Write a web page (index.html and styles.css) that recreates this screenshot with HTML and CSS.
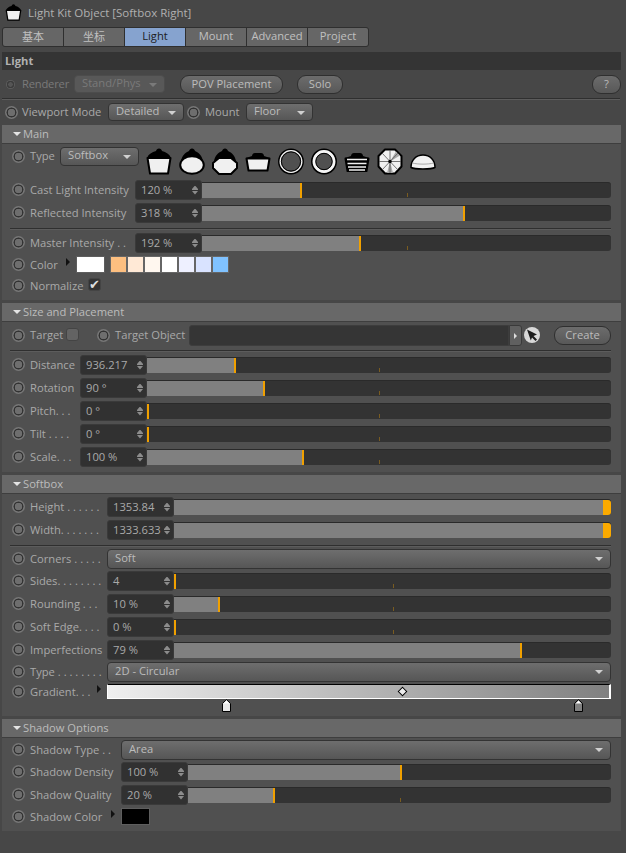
FILE: index.html
```html
<!DOCTYPE html>
<html lang="en">
<head>
<meta charset="utf-8">
<title>Light Kit Object</title>
<link rel="stylesheet" href="styles.css">
</head>
<body>
<svg class="defs" width="0" height="0" aria-hidden="true">
  <symbol id="softbox" viewBox="0 0 26 27">
    <path d="M13 0.500c-1.600 0-2.600 1.200-3 2.500C6 4 2.500 6 1 10H25C23.500 6 20 4 16 3c-.4-1.300-1.400-2.500-3-2.500z" fill="#000"/>
    <path d="M1.500 10H24.500L22 25.500H4z" fill="#f0f0f0" stroke="#000" stroke-width="2" stroke-linejoin="round"/>
  </symbol>
  <symbol id="stop" viewBox="0 0 9 13">
    <path d="M4.500 .7L8.500 4.500V12.500H.5V4.500z" fill="currentColor" stroke="#000" stroke-width="1"/>
    <path d="M4.500 1.500L7.500 4.500H1.500z" fill="#fff"/>
  </symbol>
</svg>

<header class="title-row">
  <svg class="title-icon"><use href="#softbox"/></svg>
  <span>Light Kit Object [Softbox Right]</span>
</header>

<nav class="tabs">
  <span class="tab cjk">基本</span>
  <span class="tab cjk">坐标</span>
  <span class="tab active">Light</span>
  <span class="tab">Mount</span>
  <span class="tab">Advanced</span>
  <span class="tab">Project</span>
</nav>

<div class="page-head">Light</div>

<div class="top-row renderer-row">
  <i class="radio dim"></i>
  <span class="dim-text renderer-label">Renderer</span>
  <span class="select disabled w-renderer">Stand/Phys<b class="caret"></b></span>
  <button class="pill w-pov">POV Placement</button>
  <button class="pill w-solo">Solo</button>
  <button class="pill w-help">?</button>
</div>
<hr class="rule top-rule">
<div class="top-row viewport-row">
  <i class="radio"></i>
  <span class="vp-label">Viewport Mode</span>
  <span class="select w-detailed">Detailed<b class="caret"></b></span>
  <i class="radio"></i>
  <span class="mount-label">Mount</span>
  <span class="select w-floor">Floor<b class="caret"></b></span>
</div>

<section class="sec">
  <h2 class="sec-head"><b class="open"></b>Main</h2>
  <div class="sec-body lw-main">
    <div class="row type-row">
      <i class="radio"></i>
      <span class="type-label">Type</span>
      <span class="select w-type">Softbox<b class="caret"></b></span>
      <div class="lights">
        <svg class="light"><use href="#softbox"/></svg>
        <svg class="light" viewBox="0 0 26 27"><path d="M13 .5c-1.500 0-2.500 1-3 2.500C6 4.500 3 8 2 13H24C23 8 20 4.500 16 3 15.500 1.500 14.500 .5 13 .5z" fill="#000"/><ellipse cx="13" cy="17" rx="11.800" ry="8.800" fill="#f0f0f0" stroke="#000" stroke-width="2"/></svg>
        <svg class="light" viewBox="0 0 26 27"><path d="M13 .5c-1.500 0-2.500 1-3 2.500C6 4.500 3 8 2 13H24C23 8 20 4.500 16 3 15.500 1.500 14.500 .5 13 .5z" fill="#000"/><path d="M7 10H19L25 15V20L19 26H7L1 20V15z" fill="#f0f0f0" stroke="#000" stroke-width="2" stroke-linejoin="round"/></svg>
        <svg class="light" viewBox="0 0 26 27"><path d="M7 8c0-1.500 1-3 3-3h6c2 0 3 1.500 3 3l6 2H1z" fill="#000"/><path d="M1.500 10.500H24.500L22.500 22.500H3.500z" fill="#f0f0f0" stroke="#000" stroke-width="2" stroke-linejoin="round"/></svg>
        <svg class="light" viewBox="0 0 26 27"><circle cx="13" cy="13.500" r="12.200" fill="none" stroke="#000" stroke-width="1.500"/><circle cx="13" cy="13.500" r="10.800" fill="none" stroke="#f2f2f2" stroke-width="1.300"/><circle cx="13" cy="13.500" r="9.600" fill="none" stroke="#000" stroke-width="1"/></svg>
        <svg class="light" viewBox="0 0 26 27"><circle cx="13" cy="13.500" r="12.200" fill="none" stroke="#000" stroke-width="1.600"/><circle cx="13" cy="13.500" r="10" fill="none" stroke="#f6f6f6" stroke-width="2.800"/><circle cx="13" cy="13.500" r="8.200" fill="none" stroke="#000" stroke-width="1"/></svg>
        <svg class="light" viewBox="0 0 26 27"><path d="M7 8c0-1.500 1-3 3-3h6c2 0 3 1.500 3 3l6 2H1z" fill="#000"/><path d="M1.500 10.500H24.500L22.500 23H3.500z" fill="#000" stroke="#000" stroke-width="2" stroke-linejoin="round"/><path d="M3 11.500H23M3.500 15.500H22.500M4 19H22M5 22H21" stroke="#f0f0f0" stroke-width="1.700" fill="none"/></svg>
        <svg class="light" viewBox="0 0 26 27"><path d="M8 1.500H18L24.500 8V18.500L18 25.500H8L1.500 18.500V8z" fill="#f0f0f0" stroke="#000" stroke-width="2" stroke-linejoin="round"/><path d="M13 13.500L10 25 16 25zM13 13.500L19 3.500 23 7.500z" fill="#a8a8a8"/><path d="M13 13.500V2M13 13.500L21 5M13 13.500H24M13 13.500L21 22M13 13.500V25M13 13.500L5 22M13 13.500H2M13 13.500L5 5" stroke="#555" stroke-width=".8"/><circle cx="13" cy="13.500" r="1.700" fill="#000"/></svg>
        <svg class="light" viewBox="0 0 26 27"><path d="M1 19.500C1 12 6 7 13 7s12 5 12 12.500c-4 2-20 2-24 0z" fill="#f2f2f2" stroke="#000" stroke-width="1.500" stroke-linejoin="round"/><path d="M2.500 15c5 1.500 16 1.500 21 0" fill="none" stroke="#aaa" stroke-width="1"/></svg>
      </div>
    </div>
    <div class="row slider-row"><i class="radio"></i><label>Cast Light Intensity</label><span class="num">120 %<b class="spin"></b></span><div class="track"><div class="fill" style="width:100px"></div></div></div>
    <div class="row slider-row"><i class="radio"></i><label>Reflected Intensity</label><span class="num">318 %<b class="spin"></b></span><div class="track"><div class="fill" style="width:263px"></div></div></div>
    <hr class="rule in">
    <div class="row slider-row"><i class="radio"></i><label>Master Intensity . .</label><span class="num">192 %<b class="spin"></b></span><div class="track"><div class="fill" style="width:159px"></div></div></div>
    <div class="row color-row">
      <i class="radio"></i>
      <span class="color-label">Color<b class="expand"></b></span>
      <span class="swatch white"></span>
      <div class="presets">
        <span class="preset p1"></span><span class="preset p2"></span><span class="preset p3"></span><span class="preset p4"></span><span class="preset p5"></span><span class="preset p6"></span><span class="preset p7"></span>
      </div>
    </div>
    <div class="row color-row">
      <i class="radio"></i>
      <span class="norm-label">Normalize</span>
      <span class="check on">✔</span>
    </div>
  </div>
</section>

<section class="sec">
  <h2 class="sec-head"><b class="open"></b>Size and Placement</h2>
  <div class="sec-body lw-size">
    <div class="row target-row">
      <i class="radio"></i>
      <span class="target-label">Target</span>
      <span class="check"></span>
      <i class="radio r2"></i>
      <span class="object-label">Target Object</span>
      <span class="link-field"></span>
      <span class="link-arrow"></span>
      <svg class="picker" viewBox="0 0 16 16"><circle cx="8" cy="8" r="8" fill="#d8d8d8"/><path d="M3 2.500L13 7.500 9.500 9 13 12.500 11.500 14 8 10.500 6.800 13.500z" fill="#1c1c1c"/></svg>
      <button class="pill w-create">Create</button>
    </div>
    <hr class="rule in">
    <div class="row slider-row"><i class="radio"></i><label>Distance</label><span class="num">936.217<b class="spin"></b></span><div class="track"><div class="fill" style="width:89px"></div></div></div>
    <div class="row slider-row"><i class="radio"></i><label>Rotation</label><span class="num">90 °<b class="spin"></b></span><div class="track"><div class="fill" style="width:118px"></div></div></div>
    <div class="row slider-row"><i class="radio"></i><label>Pitch. . .</label><span class="num">0 °<b class="spin"></b></span><div class="track"><div class="fill" style="width:2px"></div></div></div>
    <div class="row slider-row"><i class="radio"></i><label>Tilt . . . .</label><span class="num">0 °<b class="spin"></b></span><div class="track"><div class="fill" style="width:2px"></div></div></div>
    <div class="row slider-row"><i class="radio"></i><label>Scale. . .</label><span class="num">100 %<b class="spin"></b></span><div class="track"><div class="fill" style="width:157px"></div></div></div>
  </div>
</section>

<section class="sec">
  <h2 class="sec-head"><b class="open"></b>Softbox</h2>
  <div class="sec-body lw-soft">
    <div class="row slider-row first"><i class="radio"></i><label>Height . . . . . .</label><span class="num">1353.84<b class="spin"></b></span><div class="track"><div class="fill max" style="width:437px"></div></div></div>
    <div class="row slider-row"><i class="radio"></i><label>Width. . . . . . .</label><span class="num">1333.633<b class="spin"></b></span><div class="track"><div class="fill max" style="width:437px"></div></div></div>
    <hr class="rule in">
    <div class="row drop-row"><i class="radio"></i><label>Corners . . . . .</label><span class="select wide">Soft<b class="caret"></b></span></div>
    <div class="row slider-row"><i class="radio"></i><label>Sides. . . . . . . .</label><span class="num">4<b class="spin"></b></span><div class="track"><div class="fill" style="width:2px"></div></div></div>
    <div class="row slider-row"><i class="radio"></i><label>Rounding . . .</label><span class="num">10 %<b class="spin"></b></span><div class="track"><div class="fill" style="width:46px"></div></div></div>
    <div class="row slider-row"><i class="radio"></i><label>Soft Edge. . . .</label><span class="num">0 %<b class="spin"></b></span><div class="track"><div class="fill" style="width:2px"></div></div></div>
    <div class="row slider-row"><i class="radio"></i><label>Imperfections</label><span class="num">79 %<b class="spin"></b></span><div class="track"><div class="fill" style="width:348px"></div></div></div>
    <div class="row drop-row"><i class="radio"></i><label>Type . . . . . . . .</label><span class="select wide">2D - Circular<b class="caret"></b></span></div>
    <div class="row grad-row">
      <i class="radio"></i>
      <span class="grad-label">Gradient. . .<b class="expand"></b></span>
      <div class="gradient"><span class="knob"></span></div>
    </div>
    <div class="stops">
      <svg class="stop light-stop"><use href="#stop"/></svg>
      <svg class="stop dark-stop"><use href="#stop"/></svg>
    </div>
  </div>
</section>

<section class="sec last">
  <h2 class="sec-head"><b class="open"></b>Shadow Options</h2>
  <div class="sec-body lw-shadow">
    <div class="row drop-row first"><i class="radio"></i><label>Shadow Type . .</label><span class="select wide">Area<b class="caret"></b></span></div>
    <div class="row slider-row"><i class="radio"></i><label>Shadow Density</label><span class="num">100 %<b class="spin"></b></span><div class="track"><div class="fill" style="width:214px"></div></div></div>
    <div class="row slider-row"><i class="radio"></i><label>Shadow Quality</label><span class="num">20 %<b class="spin"></b></span><div class="track"><div class="fill" style="width:87px"></div></div></div>
    <div class="row color-row">
      <i class="radio"></i>
      <span class="shadow-color-label">Shadow Color<b class="expand"></b></span>
      <span class="swatch black"></span>
    </div>
  </div>
</section>
</body>
</html>
```

FILE: styles.css
```css
* { box-sizing: border-box; }
html, body { margin: 0; padding: 0; }
body {
  width: 626px;
  height: 853px;
  overflow: hidden;
  background: #474747;
  color: #a9a9a9;
  font: 11.2px/1 "Open Sans", "Noto Sans CJK SC", sans-serif;
}
.defs { position: absolute; }

.title-row { height: 27px; display: flex; align-items: center; gap: 6px; padding: 0 0 2px 5px; color: #b0b0b0; font-size: 11.5px; }
.title-icon { width: 17px; height: 17px; }

.tabs { display: flex; height: 20px; width: 367px; margin-left: 2px; border: 1px solid #2f2f2f; border-radius: 3px; background: #2f2f2f; gap: 1px; overflow: hidden; }
.tab { flex: 1; display: flex; align-items: center; justify-content: center; padding-bottom: 2px; background: #666; color: #c0c0c0; }
.tab.active { background: #86a3cf; color: #1d1d1d; }
.tab.cjk { font-size: 11px; }

.page-head { height: 18px; margin: 5px 5px 0 2px; padding-left: 3px; background: #343434; display: flex; align-items: center; font-weight: 700; color: #b0b0b0; }

.top-row { display: flex; align-items: center; height: 18px; }
.renderer-row { margin: 5px 0 0; padding: 0 5px 0 6px; }
.viewport-row { margin-top: 4px; padding-left: 5px; }
.top-rule { margin: 5px 6px 0 2px; }

.rule { border: 0; height: 1px; background: #2f2f2f; box-shadow: 0 1px 0 #5c5c5c; }
.rule.in { margin: 4px 0 2px -2px; }

.radio { flex: none; width: 13px; height: 13px; border-radius: 50%; background: radial-gradient(circle, #6e6e6e 0 3.500px, #333 4px 4.800px, #767676 5.200px 6.500px); }
.radio.dim { width: 9px; height: 9px; background: radial-gradient(circle, #555 0 2px, #3c3c3c 2.500px 3.500px, #5c5c5c 4px); }
.dim-text { color: #7a7a7a; }
.renderer-label { flex: none; width: 47px; margin-left: 7px; white-space: nowrap; letter-spacing: -.2px; }

.select { position: relative; display: flex; align-items: center; height: 18px; padding: 0 0 2px 7px; border: 1px solid #333; border-radius: 4px; background: linear-gradient(#6e6e6e, #565656); color: #bcbcbc; flex: none; }
.select.disabled { background: #585858; color: #7a7a7a; border-color: #4c4c4c; }
.caret { position: absolute; right: 7px; top: 7px; width: 0; height: 0; border: 4px solid transparent; border-top-color: #d0d0d0; border-bottom: 0; }
.disabled .caret { border-top-color: #7a7a7a; }
.w-renderer { width: 91px; margin-left: 5px; }
.w-detailed { width: 76px; margin-left: 4px; }
.w-floor { width: 67px; margin-left: 4px; }
.w-type { width: 79px; height: 19px; margin-left: 5px; }
.vp-label { margin-left: 4px; width: 82px; white-space: nowrap; }
.viewport-row .radio:nth-of-type(2) { margin-left: 3px; }
.mount-label { margin-left: 5px; width: 37px; }

.pill { flex: none; height: 19px; padding: 0; border: 1px solid #2f2f2f; border-radius: 9px; background: linear-gradient(#6c6c6c, #585858); color: #bcbcbc; font: inherit; }
.w-pov { width: 103px; margin-left: 15px; }
.w-solo { width: 46px; margin-left: 14px; }
.w-help { width: 29px; margin-left: auto; }
.w-create { width: 57px; margin-left: 14px; }

.sec { margin-top: 3px; margin-right: 5px; margin-left: 2px; background: #505050; }
.viewport-row + .sec { margin-top: 4px; }
.sec-head { margin: 0; height: 19px; display: flex; align-items: center; padding: 0 0 1px 11px; background: #686868; font: inherit; color: #bcbcbc; border-bottom: 1px solid #3e3e3e; }
.open { width: 0; height: 0; margin-right: 2px; border: 4px solid transparent; border-top-color: #e4e4e4; border-bottom: 0; }

.sec-body { padding: 0 10px 4px; }
.sec-body.lw-soft { padding-bottom: 2px; }
.row { display: flex; align-items: center; }
.row .radio { margin-right: 5px; }
.row label { flex: none; white-space: nowrap; }
.lw-main label { width: 105px; }
.lw-size label { width: 50px; }
.lw-soft label { width: 77px; }
.lw-shadow label { width: 91px; }

.slider-row { height: 23px; }
.slider-row.first { margin-top: 1px; }
.drop-row { height: 21px; }
.drop-row .select { height: 20px; }
.drop-row.first { margin-top: 1px; }
.color-row { height: 21px; }
.type-row { height: 24px; margin-bottom: 10px; }
.target-row { height: 22px; margin-top: 2px; }
.grad-row { height: 19px; }
.wide { flex: 1; }

.type-label { width: 25px; }
.lights { display: flex; gap: 7px; margin-left: 7px; align-self: flex-start; margin-top: 4px; }
.light { width: 26px; height: 27px; }

.num { position: relative; flex: none; width: 67px; height: 20px; display: flex; align-items: center; padding-left: 5px; background: #313131; border: 1px solid #3a3a3a; border-radius: 3px; color: #a9a9a9; }
.spin { position: absolute; right: 3px; top: 5px; width: 6px; height: 9px; background: linear-gradient(#8c8c8c 0 4px, transparent 4px 5px, #8c8c8c 5px); clip-path: polygon(50% 0, 100% 40%, 100% 60%, 50% 100%, 0 60%, 0 40%); }

.track { position: relative; flex: 1; height: 16px; background: #333; border-top: 1px solid #2a2a2a; border-radius: 0 3px 3px 0; }
.track::after { content: ""; position: absolute; left: 50%; bottom: 1px; width: 1px; height: 4px; background: #7a5c20; }
.fill { position: relative; z-index: 1; height: 100%; background: #808080; border-right: 2px solid #f0a000; }
.fill.max { border-right: 8px solid #fbaa00; border-radius: 0 3px 3px 0; }

.color-label, .grad-label, .shadow-color-label { position: relative; flex: none; white-space: nowrap; }
.color-label { width: 46px; }
.grad-label { width: 77px; }
.shadow-color-label { width: 91px; }
.expand { position: absolute; right: 6px; top: -1px; width: 0; height: 0; border: 4px solid transparent; border-left-color: #111; border-right: 0; }

.swatch { flex: none; width: 29px; height: 17px; border: 1px solid #5e5e5e; }
.swatch.white { background: #fff; }
.swatch.black { background: #000; }
.presets { display: flex; gap: 2px; margin-left: 6px; }
.preset { width: 15px; height: 15px; outline: 1px solid #666; }
.p1 { background: #fdbf80; }
.p2 { background: #ffe9d6; }
.p3 { background: #fff7ef; }
.p4 { background: #fff; }
.p5 { background: #eef0ff; }
.p6 { background: #d9e3ff; }
.p7 { background: #80c2ff; }

.norm-label { width: 58px; white-space: nowrap; }
.check { flex: none; display: flex; align-items: center; justify-content: center; width: 13px; height: 13px; border-radius: 3px; background: #636363; border: 1px solid #444; margin-top: -2px; color: #ddd; font-size: 13px; }
.check.on { background: #333; }

.target-label { width: 37px; }
.radio.r2 { margin-left: 18px; }
.object-label { width: 76px; white-space: nowrap; }
.link-field { flex: none; width: 320px; height: 21px; background: #353535; border: 1px solid #3d3d3d; border-radius: 3px 0 0 3px; }
.link-arrow { position: relative; flex: none; width: 13px; height: 21px; background: #606060; border: 1px solid #3a3a3a; border-radius: 0 3px 3px 0; }
.link-arrow::after { content: ""; position: absolute; left: 4px; top: 7px; border: 3px solid transparent; border-left-color: #ddd; border-right: 0; }
.picker { flex: none; width: 16px; height: 16px; margin-left: 2px; }

.gradient { position: relative; flex: 1; height: 15px; background: linear-gradient(90deg, #efefef, #808080); border-top: 1px solid #000; border-right: 2px solid #fff; border-bottom: 1px solid #fff; border-left: 1px solid #fff; }
.knob { position: absolute; left: 291px; top: 3px; width: 7px; height: 7px; background: #eee; border: 1px solid #000; transform: rotate(45deg); }
.stops { position: relative; height: 13px; }
.stop { position: absolute; top: -2px; width: 9px; height: 13px; }
.light-stop { left: 210px; color: #e8e8e8; }
.dark-stop { left: 562px; color: #808080; }
```
